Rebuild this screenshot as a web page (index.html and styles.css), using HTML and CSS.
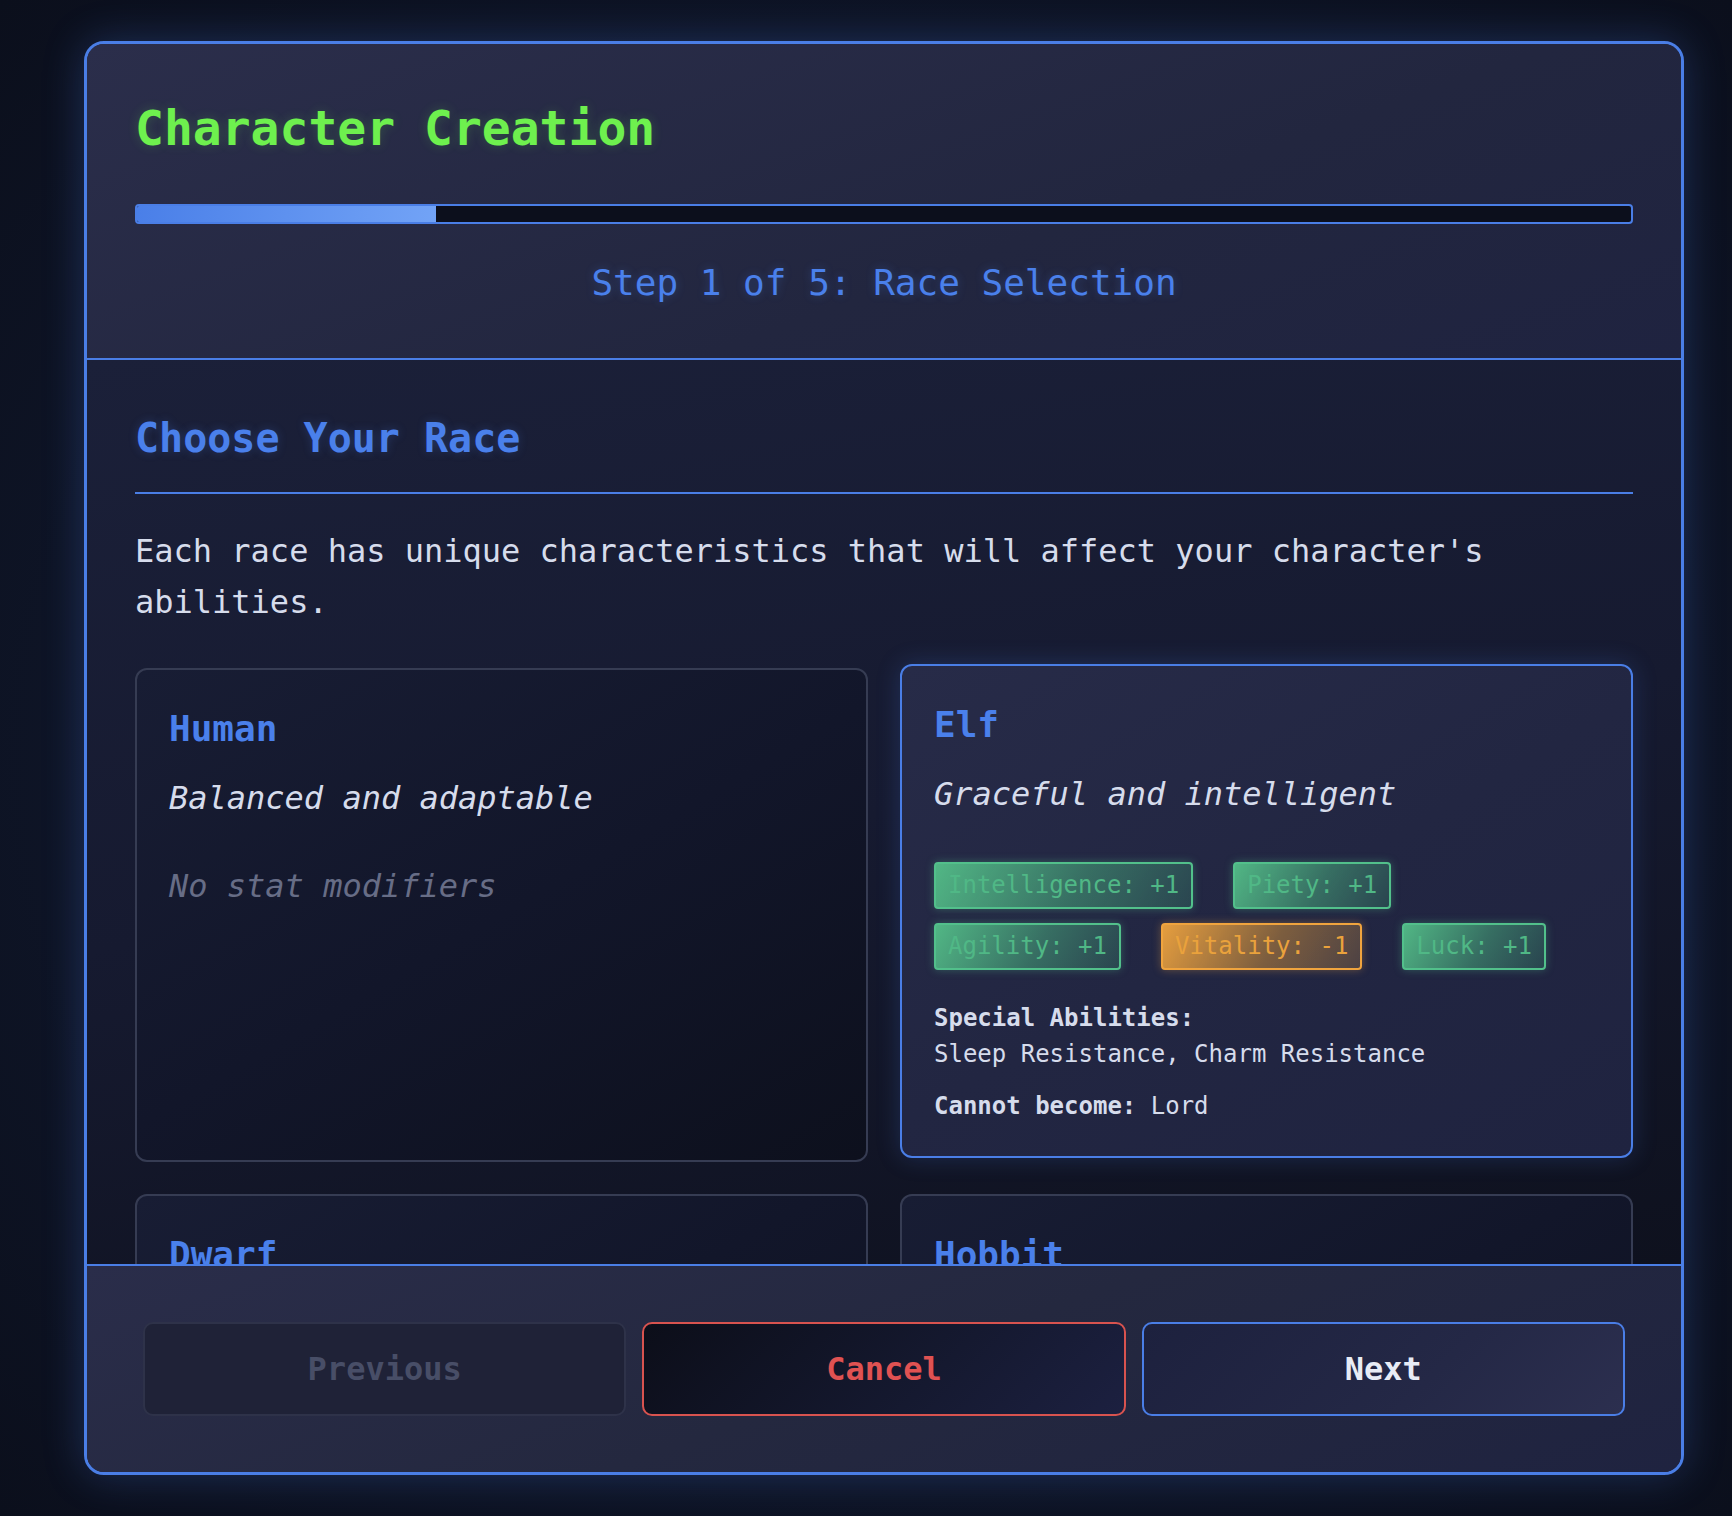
FILE: index.html
```html
<!DOCTYPE html>
<html lang="en">
<head>
<meta charset="utf-8">
<title>Character Creation</title>
<link rel="stylesheet" href="styles.css">
</head>
<body>
<div class="modal">
  <header class="modal-header">
    <h1 class="title">Character Creation</h1>
    <div class="progress"><div class="progress-fill" style="width:20%"></div></div>
    <div class="step">Step 1 of 5: Race Selection</div>
  </header>
  <main class="modal-body">
    <h2 class="section-title">Choose Your Race</h2>
    <p class="intro">Each race has unique characteristics that will affect your character's abilities.</p>
    <div class="race-grid">
      <div class="race-card">
        <h3 class="race-name">Human</h3>
        <p class="race-desc">Balanced and adaptable</p>
        <p class="no-mods">No stat modifiers</p>
      </div>
      <div class="race-card selected">
        <h3 class="race-name">Elf</h3>
        <p class="race-desc">Graceful and intelligent</p>
        <div class="mods">
          <span class="tag pos">Intelligence: +1</span>
          <span class="tag pos">Piety: +1</span>
          <span class="tag pos">Agility: +1</span>
          <span class="tag neg">Vitality: -1</span>
          <span class="tag pos">Luck: +1</span>
        </div>
        <div class="special"><strong class="label">Special Abilities:</strong>Sleep Resistance, Charm Resistance</div>
        <div class="restrict"><strong>Cannot become:</strong> Lord</div>
      </div>
      <div class="race-card">
        <h3 class="race-name">Dwarf</h3>
        <p class="race-desc">Strong and hardy</p>
        <div class="mods">
          <span class="tag pos">Strength: +1</span>
          <span class="tag pos">Vitality: +1</span>
          <span class="tag neg">Agility: -1</span>
        </div>
      </div>
      <div class="race-card">
        <h3 class="race-name">Hobbit</h3>
        <p class="race-desc">Lucky and nimble</p>
        <div class="mods">
          <span class="tag pos">Luck: +2</span>
          <span class="tag pos">Agility: +1</span>
          <span class="tag neg">Strength: -1</span>
        </div>
      </div>
    </div>
  </main>
  <footer class="modal-footer">
    <button class="btn btn-prev" disabled>Previous</button>
    <button class="btn btn-cancel">Cancel</button>
    <button class="btn btn-next">Next</button>
  </footer>
</div>
</body>
</html>
```

FILE: styles.css
```css
* {
  box-sizing: border-box;
}

html, body {
  height: 100%;
}

body {
  margin: 0;
  padding: 41px 48px 41px 84px;
  font-family: "DejaVu Sans Mono", "Liberation Mono", monospace;
  line-height: 1.5;
  color: #d6dcec;
  background:
    radial-gradient(ellipse at 50% 50%, #15213d 0%, #0f1629 55%, #0b0f1c 100%);
  overflow: hidden;
}

.modal {
  width: 1600px;
  height: 100%;
  display: flex;
  flex-direction: column;
  border: 3px solid #4a7ee6;
  border-radius: 20px;
  overflow: hidden;
  background: #1a1e36;
  box-shadow: 0 0 40px rgba(74, 126, 230, 0.28), inset 0 2px 0 rgba(255, 255, 255, 0.06);
}

.modal-header {
  padding: 48px;
  border-bottom: 2px solid #4a7ee6;
  background: linear-gradient(160deg, #2b2e4b 0%, #22263f 60%, #1f2340 100%);
  flex: none;
}

.title {
  margin: 0 0 40px;
  font-size: 48px;
  font-weight: bold;
  color: #6ef04e;
  line-height: 1.5;
  text-shadow: 0 0 12px rgba(110, 240, 78, 0.2);
}

.progress {
  height: 20px;
  border: 2px solid #4a7ee6;
  border-radius: 4px;
  background: #0c0f1c;
  overflow: hidden;
}

.progress-fill {
  height: 100%;
  background: linear-gradient(90deg, #4a7fe8, #72a3f6);
}

.step {
  margin-top: 32px;
  text-align: center;
  font-size: 36px;
  color: #4a80eb;
  line-height: 1.5;
  text-shadow: 0 0 10px rgba(74, 128, 235, 0.3);
}

.modal-body {
  flex: 1;
  min-height: 0;
  overflow: hidden;
  padding: 48px;
  background: linear-gradient(170deg, #1b2039 0%, #161a30 50%, #0e111e 100%);
}

.section-title {
  margin: 0;
  padding-bottom: 24px;
  border-bottom: 2px solid #4a7ee6;
  font-size: 40px;
  font-weight: bold;
  line-height: 1.5;
  color: #4a80eb;
  text-shadow: 0 0 10px rgba(74, 128, 235, 0.25);
}

.intro {
  margin: 32px 0 40px;
  font-size: 32px;
  line-height: 1.6;
  color: #d6dcec;
}

.race-grid {
  display: grid;
  grid-template-columns: 1fr 1fr;
  gap: 32px;
}

.race-card {
  border: 2px solid #363c53;
  border-radius: 12px;
  padding: 32px;
  background: linear-gradient(150deg, #181d34 0%, #12162a 50%, #0d101d 100%);
}

.race-card.selected {
  transform: translateY(-4px);
  border-color: #4a7ee6;
  background: linear-gradient(150deg, #272b48 0%, #222642 50%, #1f2340 100%);
  box-shadow: 0 0 24px rgba(74, 126, 230, 0.22);
}

.race-name {
  margin: 0 0 18px;
  font-size: 36px;
  font-weight: bold;
  line-height: 1.5;
  color: #4a80eb;
}

.race-desc {
  margin: 0 0 40px;
  font-size: 32px;
  font-style: italic;
  line-height: 1.5;
  color: #d6dcec;
}

.no-mods {
  margin: 0;
  font-size: 32px;
  font-style: italic;
  line-height: 1.5;
  color: #676d86;
}

.mods {
  display: flex;
  flex-wrap: wrap;
  gap: 14px 40px;
  padding-top: 4px;
  margin-bottom: 30px;
}

.tag {
  display: inline-block;
  padding: 7px 12px;
  border-radius: 4px;
  border: 2px solid;
  font-size: 24px;
  line-height: 29px;
}

.tag.pos {
  color: #50b886;
  border-color: #52c08b;
  background: linear-gradient(120deg, rgba(86, 198, 140, 0.9) 0%, rgba(72, 170, 125, 0.55) 55%, rgba(60, 140, 110, 0.3) 100%);
  box-shadow: 0 0 8px rgba(82, 192, 139, 0.35);
}

.tag.neg {
  color: #eaa23c;
  border-color: #f0a43e;
  background: linear-gradient(120deg, rgba(240, 164, 62, 0.95) 0%, rgba(200, 140, 60, 0.55) 55%, rgba(130, 100, 70, 0.45) 100%);
  box-shadow: 0 0 8px rgba(240, 164, 62, 0.35);
}

.special,
.restrict {
  font-size: 24px;
  line-height: 1.5;
  color: #d6dcec;
}

.special .label {
  display: block;
}

.restrict {
  margin-top: 16px;
}

.modal-footer {
  flex: none;
  display: flex;
  padding: 48px;
  border-top: 2px solid #4a7ee6;
  background: linear-gradient(160deg, #2a2d4a 0%, #24283f 50%, #1f2340 100%);
}

.btn {
  flex: 1;
  margin: 8px;
  padding: 21px 16px;
  border: 2px solid;
  border-radius: 10px;
  font-family: "DejaVu Sans Mono", "Liberation Mono", monospace;
  font-size: 32px;
  font-weight: bold;
  line-height: 1.5;
}

.btn-prev {
  color: #484e67;
  border-color: #2e3249;
  background: #1f2237;
}

.btn-cancel {
  color: #e05252;
  border-color: #d8534f;
  background: linear-gradient(135deg, #0c0e19 0%, #151930 60%, #1c2040 100%);
}

.btn-next {
  color: #e8ecf5;
  border-color: #4a7ee6;
  background: linear-gradient(135deg, #1d213e 0%, #242846 60%, #2c2f4f 100%);
}
```
